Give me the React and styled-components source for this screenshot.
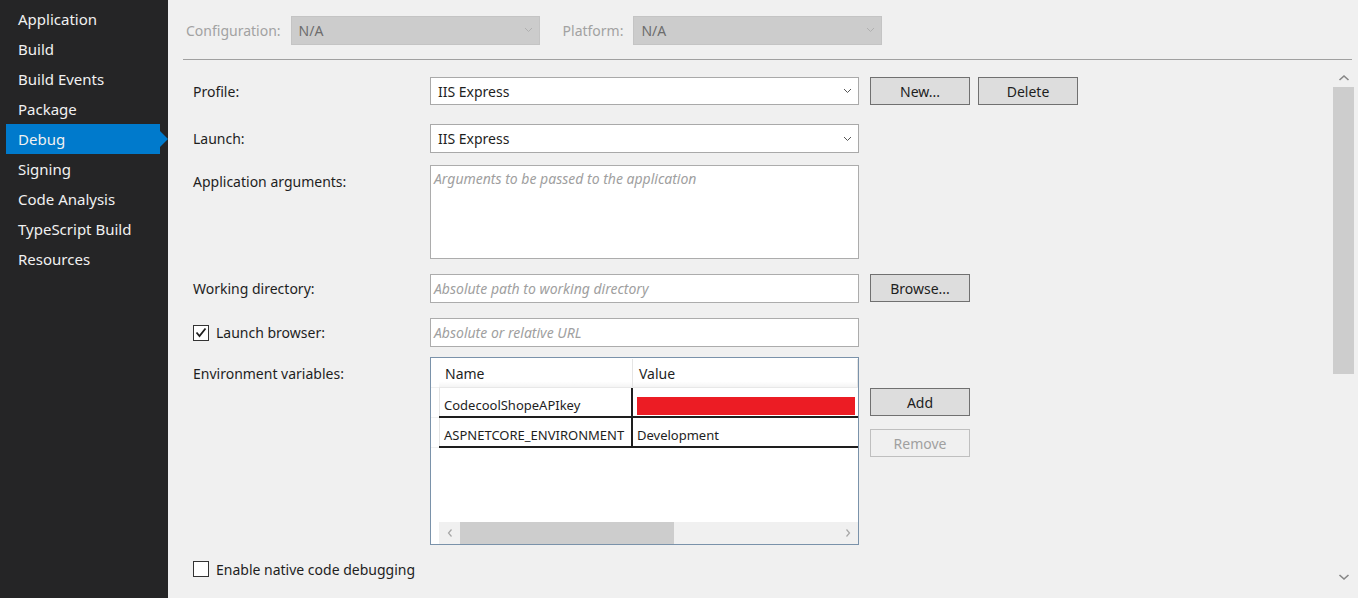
import React from 'react';
import styled, { createGlobalStyle } from 'styled-components';

const GlobalStyle = createGlobalStyle`
	html, body {
		margin: 0;
		padding: 0;
		background: #f0f0f0;
	}
	body {
		font-family: 'Noto Sans', 'Open Sans', sans-serif;
	}
`;

const navItems = [
	'Application',
	'Build',
	'Build Events',
	'Package',
	'Debug',
	'Signing',
	'Code Analysis',
	'TypeScript Build',
	'Resources',
];

const Chevron = ({ color = '#555' }) => (
	<svg width="9" height="6" viewBox="0 0 9 6">
		<path d="M1 1l3.5 3.5L8 1" fill="none" stroke={color} strokeWidth="1" />
	</svg>
);

const Arrow = ({ dir }) => (
	<svg width="8" height="10" viewBox="0 0 8 10">
		<path
			d={dir === 'left' ? 'M5.5 1.5L2.5 5l3 3.5' : 'M2.5 1.5L5.5 5l-3 3.5'}
			fill="none"
			stroke="#a6a6a6"
			strokeWidth="1.2"
		/>
	</svg>
);

const VArrow = ({ dir }) => (
	<svg width="12" height="8" viewBox="0 0 12 8">
		<path
			d={dir === 'up' ? 'M1.5 6L6 2l4.5 4' : 'M1.5 2L6 6l4.5-4'}
			fill="none"
			stroke="#868686"
			strokeWidth="1.6"
		/>
	</svg>
);

const App = () => {
	return (
		<>
			<GlobalStyle />
			<Page>
				<Sidebar>
					{navItems.map((item) => (
						<NavItem key={item} $active={item === 'Debug'}>
							{item}
						</NavItem>
					))}
				</Sidebar>
				<Main>
					<Toolbar>
						<ToolLabel>Configuration:</ToolLabel>
						<DisabledSelect>
							<span>N/A</span>
							<Chevron color="#b0b0b0" />
						</DisabledSelect>
						<ToolLabel $ml={23}>Platform:</ToolLabel>
						<DisabledSelect>
							<span>N/A</span>
							<Chevron color="#b0b0b0" />
						</DisabledSelect>
					</Toolbar>
					<Divider />
					<Body>
						<Form>
							<Row $mt={17} $h={28}>
								<Label>Profile:</Label>
								<Select>
									<span>IIS Express</span>
									<Chevron />
								</Select>
								<Buttons>
									<Button>New...</Button>
									<Button>Delete</Button>
								</Buttons>
							</Row>
							<Row $mt={19} $h={29}>
								<Label>Launch:</Label>
								<Select>
									<span>IIS Express</span>
									<Chevron />
								</Select>
							</Row>
							<Row $mt={12} $h={94} $top>
								<Label $pt={7}>Application arguments:</Label>
								<TextArea>
									<Placeholder>Arguments to be passed to the application</Placeholder>
								</TextArea>
							</Row>
							<Row $mt={15} $h={29}>
								<Label>Working directory:</Label>
								<Input>
									<Placeholder>Absolute path to working directory</Placeholder>
								</Input>
								<Buttons>
									<Button>Browse...</Button>
								</Buttons>
							</Row>
							<Row $mt={15} $h={29}>
								<CheckLabel>
									<CheckBox $checked>
										<svg width="12" height="11" viewBox="0 0 12 11">
											<path d="M1.5 5.5l3 3.5L10.5 1.5" fill="none" stroke="#1e1e1e" strokeWidth="1.8" />
										</svg>
									</CheckBox>
									Launch browser:
								</CheckLabel>
								<Input>
									<Placeholder>Absolute or relative URL</Placeholder>
								</Input>
							</Row>
							<Row $mt={10} $h={188} $top>
								<Label $pt={7}>Environment variables:</Label>
								<Grid>
									<GridInner>
										<Gutter>
											<GutterCell $h={29} />
											<GutterCell $h={30} />
											<GutterCell $h={30} />
										</Gutter>
										<Table>
											<HeaderRow>
												<HeadCell $w={194}>Name</HeadCell>
												<HeadCell>Value</HeadCell>
											</HeaderRow>
											<DataRow>
												<DataCell $w={194}>CodecoolShopeAPIkey</DataCell>
												<DataCell>
													<Redacted />
												</DataCell>
											</DataRow>
											<DataRow>
												<DataCell $w={194}>ASPNETCORE_ENVIRONMENT</DataCell>
												<DataCell>Development</DataCell>
											</DataRow>
										</Table>
									</GridInner>
									<HScroll>
										<ScrollArrow>
											<Arrow dir="left" />
										</ScrollArrow>
										<HTrack>
											<HThumb />
										</HTrack>
										<ScrollArrow>
											<Arrow dir="right" />
										</ScrollArrow>
									</HScroll>
								</Grid>
								<Buttons $column>
									<Button>Add</Button>
									<Button $disabled>Remove</Button>
								</Buttons>
							</Row>
							<Row $mt={13} $h={22}>
								<CheckLabel>
									<CheckBox />
									Enable native code debugging
								</CheckLabel>
							</Row>
						</Form>
						<VScroll>
							<VArrowBox>
								<VArrow dir="up" />
							</VArrowBox>
							<VTrack>
								<VThumb />
							</VTrack>
							<VArrowBox>
								<VArrow dir="down" />
							</VArrowBox>
						</VScroll>
					</Body>
				</Main>
			</Page>
		</>
	);
};

const Page = styled.div`
	display: flex;
	width: 1358px;
	height: 598px;
	overflow: hidden;
	background: #f0f0f0;
`;

const Sidebar = styled.nav`
	width: 168px;
	flex-shrink: 0;
	background: #252526;
	padding-top: 4px;
	box-sizing: border-box;
`;

const NavItem = styled.div`
	position: relative;
	height: 30px;
	line-height: 30px;
	margin-left: 6px;
	margin-right: 8px;
	padding-left: 12px;
	font-size: 15px;
	color: #f1f1f1;
	background: ${(p) => (p.$active ? '#007acc' : 'transparent')};
	&::after {
		content: '';
		display: ${(p) => (p.$active ? 'block' : 'none')};
		position: absolute;
		right: -8px;
		top: 7px;
		border-left: 8px solid #007acc;
		border-top: 8px solid transparent;
		border-bottom: 8px solid transparent;
	}
`;

const Main = styled.main`
	flex: 1;
	display: flex;
	flex-direction: column;
	min-width: 0;
`;

const Toolbar = styled.div`
	display: flex;
	align-items: center;
	padding: 16px 0 0 18px;
	height: 28px;
`;

const ToolLabel = styled.span`
	font-size: 14px;
	color: #a2a2a2;
	margin-left: ${(p) => p.$ml || 0}px;
	margin-right: 10px;
`;

const SelectBase = styled.div`
	box-sizing: border-box;
	display: flex;
	align-items: center;
	justify-content: space-between;
	padding: 0 6px 0 7px;
	font-size: 14px;
`;

const DisabledSelect = styled(SelectBase)`
	width: 249px;
	height: 29px;
	background: #cccccc;
	border: 1px solid #c4c4c4;
	color: #6d6d6d;
`;

const Divider = styled.div`
	height: 1px;
	background: #a0a0a0;
	margin: 15px 6px 0 15px;
`;

const Body = styled.div`
	flex: 1;
	display: flex;
	min-height: 0;
`;

const Form = styled.div`
	flex: 1;
	padding-left: 25px;
`;

const Row = styled.div`
	display: grid;
	grid-template-columns: 226px 429px auto;
	column-gap: 11px;
	align-items: ${(p) => (p.$top ? 'start' : 'center')};
	height: ${(p) => p.$h}px;
	margin-top: ${(p) => p.$mt}px;
`;

const Label = styled.div`
	font-size: 14px;
	color: #1e1e1e;
	padding-top: ${(p) => p.$pt || 0}px;
`;

const Select = styled(SelectBase)`
	height: 100%;
	background: #ffffff;
	border: 1px solid #a9a9a9;
	color: #1e1e1e;
`;

const Input = styled.div`
	box-sizing: border-box;
	height: 100%;
	display: flex;
	align-items: center;
	padding-left: 3px;
	background: #ffffff;
	border: 1px solid #acacac;
`;

const TextArea = styled(Input)`
	align-items: flex-start;
	padding-top: 3px;
`;

const Placeholder = styled.span`
	font-size: 14px;
	font-style: italic;
	color: #a0a0a0;
`;

const Buttons = styled.div`
	display: flex;
	flex-direction: ${(p) => (p.$column ? 'column' : 'row')};
	gap: ${(p) => (p.$column ? 13 : 8)}px;
	padding-top: ${(p) => (p.$column ? 31 : 0)}px;
	height: ${(p) => (p.$column ? 'auto' : '100%')};
`;

const Button = styled.div`
	box-sizing: border-box;
	width: 100px;
	height: 28px;
	display: flex;
	align-items: center;
	justify-content: center;
	font-size: 14px;
	background: ${(p) => (p.$disabled ? '#f0f0f0' : '#dddddd')};
	border: 1px solid ${(p) => (p.$disabled ? '#bfbfbf' : '#707070')};
	color: ${(p) => (p.$disabled ? '#a0a0a0' : '#1e1e1e')};
`;

const CheckLabel = styled.label`
	display: flex;
	align-items: center;
	gap: 7px;
	font-size: 14px;
	color: #1e1e1e;
	white-space: nowrap;
`;

const CheckBox = styled.span`
	box-sizing: border-box;
	width: 16px;
	height: 16px;
	display: flex;
	align-items: center;
	justify-content: center;
	background: #ffffff;
	border: 1px solid #333333;
`;

const Grid = styled.div`
	box-sizing: border-box;
	height: 100%;
	display: flex;
	flex-direction: column;
	background: #ffffff;
	border: 1px solid #7a92aa;
`;

const GridInner = styled.div`
	flex: 1;
	display: flex;
	padding-top: 1px;
`;

const Gutter = styled.div`
	width: 8px;
	display: flex;
	flex-direction: column;
`;

const GutterCell = styled.div`
	height: ${(p) => p.$h}px;
	box-sizing: border-box;
	border-bottom: 1px solid #f0f0f0;
`;

const Table = styled.div`
	flex: 1;
	display: flex;
	flex-direction: column;
`;

const HeaderRow = styled.div`
	display: flex;
	height: 29px;
	background: linear-gradient(#ffffff 80%, #f4f4f4);
	border-bottom: 1px solid #e8e8e8;
	box-sizing: border-box;
`;

const HeadCell = styled.div`
	box-sizing: border-box;
	width: ${(p) => (p.$w ? `${p.$w}px` : 'auto')};
	flex: ${(p) => (p.$w ? 'none' : 1)};
	display: flex;
	align-items: center;
	padding-left: 6px;
	font-size: 14px;
	color: #1e1e1e;
	border-right: 1px solid #e5e5e5;
`;

const DataRow = styled.div`
	display: flex;
	height: 30px;
	box-sizing: border-box;
	border-bottom: 2px solid #1e1e1e;
`;

const DataCell = styled.div`
	box-sizing: border-box;
	width: ${(p) => (p.$w ? `${p.$w}px` : 'auto')};
	flex: ${(p) => (p.$w ? 'none' : 1)};
	display: flex;
	align-items: flex-end;
	padding: 0 0 2px 4px;
	font-size: 13px;
	color: #1e1e1e;
	border-right: ${(p) => (p.$w ? '2px solid #1e1e1e' : 'none')};
	border-left: ${(p) => (p.$w ? '1px solid #e5e5e5' : 'none')};
`;

const Redacted = styled.div`
	width: 218px;
	height: 18px;
	margin-bottom: -1px;
	background: #ec1c24;
`;

const HScroll = styled.div`
	display: flex;
	height: 22px;
	margin-left: 8px;
	background: #f0f0f0;
`;

const ScrollArrow = styled.div`
	width: 21px;
	display: flex;
	align-items: center;
	justify-content: center;
`;

const HTrack = styled.div`
	flex: 1;
	display: flex;
`;

const HThumb = styled.div`
	width: 214px;
	background: #cdcdcd;
`;

const VScroll = styled.div`
	width: 21px;
	margin: 8px 4px 12px 0;
	display: flex;
	flex-direction: column;
`;

const VArrowBox = styled.div`
	height: 19px;
	display: flex;
	align-items: center;
	justify-content: center;
`;

const VTrack = styled.div`
	flex: 1;
`;

const VThumb = styled.div`
	height: 287px;
	background: #cdcdcd;
`;

export default App;
